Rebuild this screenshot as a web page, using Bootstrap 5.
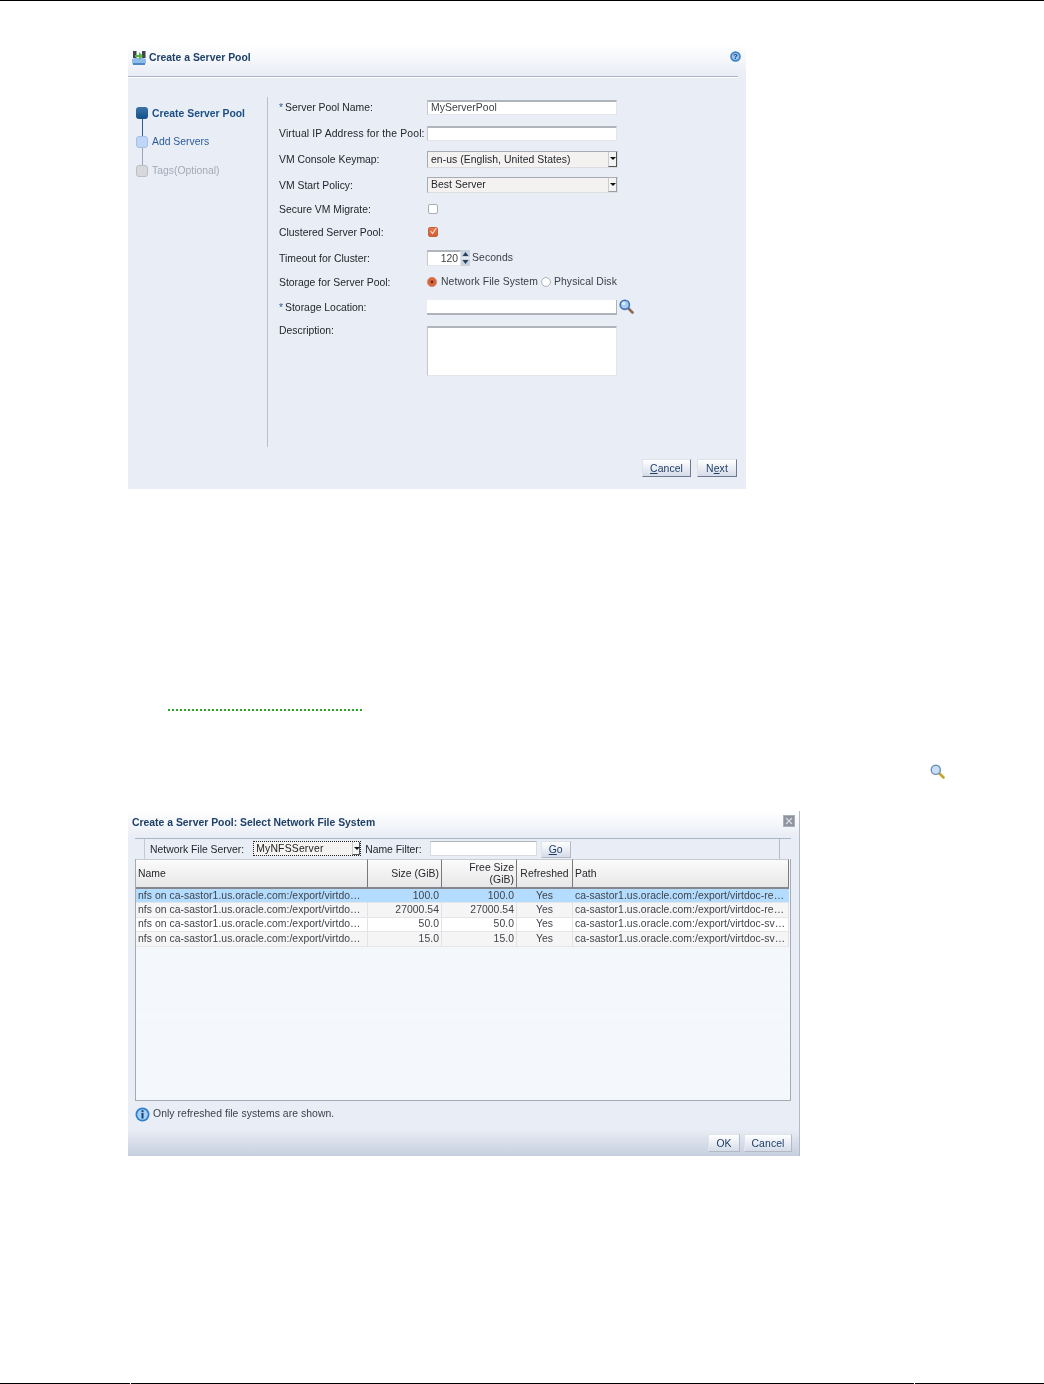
<!DOCTYPE html>
<html lang="en">
<head>
<meta charset="utf-8">
<title>Create a Server Pool</title>
<link href="https://cdn.jsdelivr.net/npm/bootstrap@5.3.0/dist/css/bootstrap.min.css" rel="stylesheet">
<style>
html,body{margin:0;background:#fff}
body{font-family:"Liberation Sans",Arial,sans-serif;font-size:10.4px;line-height:1.2;color:#23262c}
.sheet{width:1044px;height:1384px;overflow:hidden}
.rule-top{height:1px;background:#000}
.rule-end{height:1px;background:linear-gradient(90deg,#000 130px,#fff 130px,#fff 131px,#000 131px,#000 914px,#fff 914px,#fff 915px,#000 915px)}
.dlg{margin-left:128px;background:#e9edf5;filter:blur(.3px)}
.dlg-a{margin-top:44px;width:618px;height:444px;background:linear-gradient(180deg,#fff 0,#e9edf5 30px,#e9edf5 100%)}
.dlg-b{margin-top:32px;width:672px;height:345px;background:linear-gradient(180deg,#fff 0,#e9edf5 26px,#e9edf5 318px,#c6cfdf 100%);border-right:1px solid #b4bac6}
.ttl{font-weight:700;font-size:10.4px;color:#1f4067}
.ttl-a{height:32px;padding:6px 7px 0 4px;gap:3px;border-bottom:1px solid #a9b4c8;margin-right:8px;box-shadow:0 1px 0 #fff}
.ttl-a span{padding-top:1px}
.rail{width:140px;height:350px;margin-top:20px;border-right:1px solid #bcbfc5;position:relative;padding:10px 0 0 8px}
.stp{height:29px;gap:4px;position:relative}
.stp-cur>span:nth-child(2){padding-top:1px}
.stp-cur{font-weight:700;color:#1c4f86}
.stp-nxt{color:#2b5c99}
.stp-off{color:#a3aab6}
.nd{width:12px;height:12px;border-radius:3px;flex:none;position:relative;z-index:1}
.nd-cur{background:linear-gradient(180deg,#3a74a8,#14508a)}
.nd-nxt{background:#bfd6f6;border:1px solid #a3c0ea}
.nd-off{background:#d6d8dc;border:1px solid #bbbec4}
.lnk{position:absolute;left:5.5px;top:12px;width:1px;height:17px}
.lnk-a{background:#2b5c99}
.lnk-b{background:#9aa4b4}
.frm{padding:23px 0 0 11px;width:470px}
.fl{width:148px;flex:none;white-space:nowrap;padding-top:2px}
.fl-wide{letter-spacing:.14px}
.fl-top{padding-top:0;margin-top:-1px}
.ast{color:#2b5c99;margin-right:2px}
.h15{height:15px}.h16{height:16px}.h17{height:17px}.h50{height:50px}
.g7{margin-top:7px}.g8{margin-top:8px}.g9{margin-top:9px}.g10{margin-top:10px}.g11{margin-top:11px}
.inp{width:190px;background:#fff;border:1px solid #e3e5ea;border-top:2px solid #b0b4bb;border-left-color:#c4c7cd;padding:0 3px;color:#3c3f46;letter-spacing:.05px;line-height:12px}
.inp-low{border:0;border-right:1px solid #aeb2ba;border-bottom:2px solid #aeb2ba}
.sel{width:191px;background:#f4f2f0;border:1px solid #dcdde0;border-top:1px solid #a7abb3;border-left:1px solid #a7abb3;padding:2px 0 0 3px;position:relative;letter-spacing:.05px}
.sel-tight{padding-top:1px}
.sel-arrow{position:absolute;right:0;top:0;bottom:0;width:9px;background:#f4f4f4;border-left:1px solid #c9ccd1;border-right:1px solid #555;border-bottom:1px solid #555}
.sel-soft{border-right-color:#9a9da3;border-bottom-color:#9a9da3}
.sel-arrow::after{content:"";position:absolute;left:1px;top:5px;border:3px solid transparent;border-top:3px solid #111}
.chk{display:block;width:10px;height:10px;border:1px solid #a9adb5;border-radius:2px;background:#fff;margin-left:1px}
.chk-on{background:linear-gradient(180deg,#e07a52,#cf5f38);border-color:#c9603c}
.num{width:34px;text-align:right;background:#fff;border:1px solid #e3e5ea;border-top:2px solid #b0b4bb;border-left-color:#c4c7cd;padding-right:2px;line-height:13px;color:#3c3f46}
.spin{width:9px;height:16px;flex:none;margin-right:2px}
.rd{width:10px;height:10px;flex:none;display:block}
.rd-gap{margin-left:3px}
.rt{color:#3c4049;letter-spacing:.09px}
.srch{margin:-2px 0 0 2px}
.btn-x{font:inherit;color:#1f3e66;padding:0;background:linear-gradient(180deg,#fff,#d5dce9);border:1px solid #dfe3ea;border-right-color:#6f7a8c;border-bottom-color:#6f7a8c;border-radius:0;height:18px;line-height:15px;letter-spacing:.1px}
.btn-soft{border-right-color:#b3bac6;border-bottom-color:#b3bac6}
.foot-a{position:absolute;right:9px;bottom:12px;gap:6px}
.w49{width:49px}.w40{width:40px}.w32{width:32px}.w48{width:48px}.w30{width:30px}
.acc{text-decoration:underline}
.dotline{margin:220px 0 0 168px;width:196px;height:2px;background:repeating-linear-gradient(90deg,#2aa52a 0,#2aa52a 2px,transparent 2px,transparent 4px)}
.mag-row{margin:53px 0 0 930px;height:15px}
.help{position:absolute;right:5px;top:6px}
.ttl-b{height:27px;padding:6px 5px 0 4px}
.clo{width:12px;height:12px;background:#8d949f;border:1px solid #aab0ba;position:absolute;right:4px;top:4px}
.bar{margin:0 8px 0 7px;height:21px;border-top:1px solid #a9b4c8;position:relative;padding:2px 0 0 15px;gap:0}
.bar::before{content:"";position:absolute;left:9px;top:0;bottom:0;width:1px;background:#c3cad6}
.bar::after{content:"";position:absolute;right:11px;top:0;bottom:0;width:1px;background:#b6bdca}
.bar-t{padding-top:3px;white-space:nowrap}
.sel2{width:108px;height:15px;margin-left:9px;border:1px dotted #222;background:#f5f3f1;position:relative;padding:1px 0 0 2px;color:#222;font-size:10.4px;letter-spacing:.2px;line-height:12px}
.sel2 .sel-arrow{width:8px}
.bar-l{margin-left:4px;margin-right:8px}
.inp2{width:107px;height:15px;background:#fff;border:1px solid #d8dbe2;border-top-color:#b0b4bb}
.go{margin-left:4px;height:17px;line-height:14px}
.pane{margin:0 8px 0 7px;height:242px;border:1px solid #a6abb3;border-top:0;background:repeating-linear-gradient(180deg,#f4f7fb 0,#f4f7fb 14px,#f2f5f9 14px,#f2f5f9 15px);position:relative}
.grid{table-layout:fixed;width:653px;border-collapse:separate;border-spacing:0;margin:0;font-size:10.4px;letter-spacing:.04px}
.grid th{height:30px;font-weight:400;padding:0 2px;background:linear-gradient(180deg,#fbfbfb,#e7e7e7);border-right:1px solid #77797f;border-bottom:2px solid #85878c;border-top:1px solid #c8cbd0;line-height:12px;color:#26282d}
.grid td{height:14.4px;padding:0 2px;border-right:1px solid #e2e3e6;border-bottom:1px solid #e5e6e9;color:#40434a;background:#fff;line-height:12px;white-space:nowrap;overflow:visible}
.grid tr.alt td{background:#f5f5f5}
.grid tr.on td{background:#b3dcff;border-right-color:#b3dcff}
.c1{width:232px}.c2{width:74px}.c3{width:75px}.c4{width:56px}.c5{width:216px}
.note{padding:6px 0 0 7px;gap:3px;color:#3b3f47;letter-spacing:.06px}
.note span{padding-top:1px}
.foot-b{position:absolute;right:7px;bottom:4px;gap:4px}
.dlgrel{position:relative}
</style>
</head>
<body>
<div class="sheet d-flex flex-column">
  <div class="rule-top"></div>

  <section class="dlg dlg-a dlgrel">
    <div class="ttl ttl-a d-flex align-items-start">
      <svg width="14" height="14" viewBox="0 0 14 14" aria-hidden="true"><path d="M0 8l3-1h8l3 1v4l-2 2H2l-2-2z" fill="#8dbcec"/><path d="M1 12h12v2H1z" fill="#4f86c4"/><rect x="1" y="0" width="3.5" height="7" fill="#3d4650"/><rect x="10" y="0" width="3.5" height="7" fill="#3d4650"/><path d="M3 4h4V1l4 4-4 4V6H3z" fill="#55b53e"/></svg>
      <span>Create a Server Pool</span>
    </div>
    <svg class="help" width="11" height="11" viewBox="0 0 11 11" aria-hidden="true"><circle cx="5.5" cy="5.5" r="5.3" fill="#3f84c8"/><circle cx="5.5" cy="5.5" r="3.6" fill="#9cc4ea"/><text x="5.5" y="8.3" text-anchor="middle" font-size="8" font-weight="700" font-family="Liberation Sans" fill="#123f78">?</text></svg>

    <div class="d-flex">
      <nav class="rail">
        <div class="stp stp-cur d-flex align-items-start"><span class="nd nd-cur"></span><span>Create Server Pool</span><i class="lnk lnk-a"></i></div>
        <div class="stp stp-nxt d-flex align-items-start"><span class="nd nd-nxt"></span><span>Add Servers</span><i class="lnk lnk-b"></i></div>
        <div class="stp stp-off d-flex align-items-start"><span class="nd nd-off"></span><span>Tags(Optional)</span></div>
      </nav>
      <form class="frm">
        <div class="d-flex align-items-center h15"><span class="fl"><span class="ast">*</span>Server Pool Name:</span><div class="inp h15">MyServerPool</div></div>
        <div class="d-flex align-items-center h15 g11"><span class="fl fl-wide">Virtual IP Address for the Pool:</span><div class="inp h15"></div></div>
        <div class="d-flex align-items-center h17 g10"><span class="fl">VM Console Keymap:</span><div class="sel h17 d-flex align-items-center">en-us (English, United States)<span class="sel-arrow"></span></div></div>
        <div class="d-flex align-items-center h16 g9"><span class="fl">VM Start Policy:</span><div class="sel sel-tight h16 d-flex align-items-center">Best Server<span class="sel-arrow sel-soft"></span></div></div>
        <div class="d-flex align-items-center h16 g8"><span class="fl">Secure VM Migrate:</span><span class="chk"></span></div>
        <div class="d-flex align-items-center h16 g7"><span class="fl">Clustered Server Pool:</span><span class="chk chk-on d-flex align-items-center justify-content-center"><svg width="10" height="10" viewBox="0 0 10 10" aria-hidden="true"><path d="M2 4l2.5 3L9 0" fill="none" stroke="#f6dcc8" stroke-width="1.4"/></svg></span></div>
        <div class="d-flex align-items-center h16 g10"><span class="fl">Timeout for Cluster:</span><div class="num h16">120</div><svg class="spin" viewBox="0 0 9 16" aria-hidden="true"><rect width="9" height="16" fill="#c9d2de"/><path d="M0 8h9" stroke="#fff"/><path d="M4.5 2l3 4h-6z" fill="#27405e"/><path d="M4.5 14l3-4h-6z" fill="#27405e"/></svg><span class="rt">Seconds</span></div>
        <div class="d-flex align-items-center h16 g8"><span class="fl">Storage for Server Pool:</span>
          <svg class="rd" viewBox="0 0 10 10" aria-hidden="true"><circle cx="5" cy="5" r="4.7" fill="#d9683f" stroke="#cf7a58" stroke-width=".5"/><circle cx="5" cy="5" r="1.4" fill="#6b2a10"/></svg>
          <span class="rt ms-1">Network File System</span>
          <svg class="rd rd-gap" viewBox="0 0 10 10" aria-hidden="true"><circle cx="5" cy="5" r="4.4" fill="#fff" stroke="#aab0b8"/></svg>
          <span class="rt rd-gap">Physical Disk</span></div>
        <div class="d-flex align-items-center h15 g10"><span class="fl"><span class="ast">*</span>Storage Location:</span><div class="inp inp-low h15"></div>
          <svg class="srch" width="15" height="15" viewBox="0 0 15 15" aria-hidden="true"><path d="M8.5 8.5l5 5" stroke="#8a6a55" stroke-width="2.6" stroke-linecap="round"/><circle cx="5.8" cy="5.8" r="4.6" fill="#a9cdf2" stroke="#3f74b4" stroke-width="1.6"/><circle cx="4.6" cy="4.4" r="1.5" fill="#e4f1fd"/></svg></div>
        <div class="d-flex align-items-start h50 g11"><span class="fl fl-top">Description:</span><div class="inp h50"></div></div>
      </form>
    </div>
    <div class="foot-a d-flex">
      <button type="button" class="btn-x w49"><span class="acc">C</span>ancel</button>
      <button type="button" class="btn-x w40">N<span class="acc">e</span>xt</button>
    </div>
  </section>

  <div class="dotline"></div>
  <div class="mag-row">
    <svg class="d-block" width="15" height="15" viewBox="0 0 15 15" aria-hidden="true"><path d="M8.5 8.5l5 5" stroke="#c4a72d" stroke-width="2.6" stroke-linecap="round"/><circle cx="5.8" cy="5.8" r="4.6" fill="#c7def5" stroke="#6d8fb5" stroke-width="1.4"/></svg>
  </div>

  <section class="dlg dlg-b dlgrel">
    <div class="ttl ttl-b">Create a Server Pool: Select Network File System</div>
    <span class="clo d-flex align-items-center justify-content-center"><svg width="8" height="8" viewBox="0 0 8 8" aria-hidden="true"><path d="M1 1l6 6M7 1L1 7" stroke="#d9dce2" stroke-width="1.2"/></svg></span>
    <div class="bar d-flex align-items-start">
      <span class="bar-t">Network File Server:</span>
      <div class="sel2">MyNFSServer<span class="sel-arrow"></span></div>
      <span class="bar-t bar-l">Name Filter:</span>
      <div class="inp2"></div>
      <button type="button" class="btn-x btn-soft w30 go"><span class="acc">G</span>o</button>
    </div>
    <div class="pane">
      <table class="grid">
        <colgroup><col class="c1"><col class="c2"><col class="c3"><col class="c4"><col class="c5"></colgroup>
        <thead>
          <tr><th>Name</th><th class="text-end">Size (GiB)</th><th class="text-end">Free Size<br>(GiB)</th><th class="text-center">Refreshed</th><th>Path</th></tr>
        </thead>
        <tbody>
          <tr class="on"><td>nfs on ca-sastor1.us.oracle.com:/export/virtdo…</td><td class="text-end">100.0</td><td class="text-end">100.0</td><td class="text-center">Yes</td><td>ca-sastor1.us.oracle.com:/export/virtdoc-re…</td></tr>
          <tr class="alt"><td>nfs on ca-sastor1.us.oracle.com:/export/virtdo…</td><td class="text-end">27000.54</td><td class="text-end">27000.54</td><td class="text-center">Yes</td><td>ca-sastor1.us.oracle.com:/export/virtdoc-re…</td></tr>
          <tr><td>nfs on ca-sastor1.us.oracle.com:/export/virtdo…</td><td class="text-end">50.0</td><td class="text-end">50.0</td><td class="text-center">Yes</td><td>ca-sastor1.us.oracle.com:/export/virtdoc-sv…</td></tr>
          <tr class="alt"><td>nfs on ca-sastor1.us.oracle.com:/export/virtdo…</td><td class="text-end">15.0</td><td class="text-end">15.0</td><td class="text-center">Yes</td><td>ca-sastor1.us.oracle.com:/export/virtdoc-sv…</td></tr>
        </tbody>
      </table>
    </div>
    <div class="note d-flex align-items-start">
      <svg width="15" height="15" viewBox="0 0 15 15" aria-hidden="true"><circle cx="7.5" cy="7.5" r="7" fill="#2f7fd0"/><circle cx="7.5" cy="7.5" r="5.2" fill="#a8d0f4"/><rect x="6.5" y="6" width="2" height="5.5" fill="#123f78"/><rect x="6.5" y="3.2" width="2" height="2" fill="#123f78"/></svg>
      <span>Only refreshed file systems are shown.</span>
    </div>
    <div class="foot-b d-flex">
      <button type="button" class="btn-x btn-soft w32">OK</button>
      <button type="button" class="btn-x btn-soft w48">Cancel</button>
    </div>
  </section>

  <div class="rule-end mt-auto"></div>
</div>
<script src="https://cdn.jsdelivr.net/npm/bootstrap@5.3.0/dist/js/bootstrap.bundle.min.js"></script>
</body>
</html>
